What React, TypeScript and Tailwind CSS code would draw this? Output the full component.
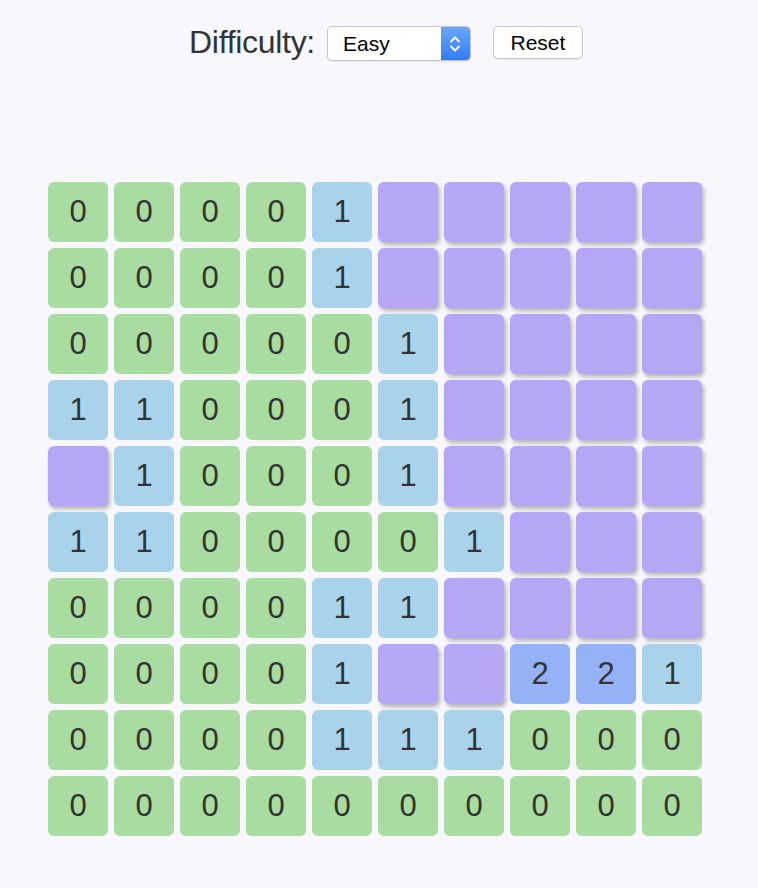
import React from 'react';

type Cell = number | 'P';

const board: Cell[][] = [
  [0, 0, 0, 0, 1, 'P', 'P', 'P', 'P', 'P'],
  [0, 0, 0, 0, 1, 'P', 'P', 'P', 'P', 'P'],
  [0, 0, 0, 0, 0, 1, 'P', 'P', 'P', 'P'],
  [1, 1, 0, 0, 0, 1, 'P', 'P', 'P', 'P'],
  ['P', 1, 0, 0, 0, 1, 'P', 'P', 'P', 'P'],
  [1, 1, 0, 0, 0, 0, 1, 'P', 'P', 'P'],
  [0, 0, 0, 0, 1, 1, 'P', 'P', 'P', 'P'],
  [0, 0, 0, 0, 1, 'P', 'P', 2, 2, 1],
  [0, 0, 0, 0, 1, 1, 1, 0, 0, 0],
  [0, 0, 0, 0, 0, 0, 0, 0, 0, 0],
];

const Tile = ({ value }: { value: Cell }) => {
  if (value === 'P') {
    return (
      <div className="w-[60px] h-[60px] rounded-[6px] bg-[#b5a7f6] shadow-[2px_3px_4px_rgba(0,0,0,0.28)]" />
    );
  }
  const color =
    value === 0 ? 'bg-[#a8dca0]' : value === 1 ? 'bg-[#a9d3eb]' : 'bg-[#95b2f7]';
  return (
    <div
      className={`w-[60px] h-[60px] rounded-[6px] ${color} flex items-center justify-center text-[31px] text-[#333333]`}
    >
      {value}
    </div>
  );
};

export default function App() {
  return (
    <div
      className="w-[758px] h-[888px] bg-[#f7f7fd] flex flex-col items-center"
      style={{ fontFamily: '"Liberation Sans", Arial, sans-serif' }}
    >
      <div className="flex items-center mt-[18px] ml-[14px]">
        <span className="text-[32px] text-[#333333] tracking-[-0.3px]">Difficulty:</span>
        <div className="ml-[12px] mt-[3px] flex h-[35px] w-[144px] rounded-[5px] border border-[#c6c6c6] bg-white shadow-[0_1px_1px_rgba(0,0,0,0.08)] overflow-hidden">
          <span className="flex-1 pl-[15px] flex items-center text-[21px] text-black">Easy</span>
          <div className="w-[29px] bg-gradient-to-b from-[#6aa6f8] to-[#2f7cf6] flex items-center justify-center">
            <svg width="12" height="20" viewBox="0 0 12 20" fill="none" stroke="white" strokeWidth="1.8" strokeLinecap="round" strokeLinejoin="round">
              <path d="M2 7.5 L6 3.5 L10 7.5" />
              <path d="M2 12.5 L6 16.5 L10 12.5" />
            </svg>
          </div>
        </div>
        <button className="ml-[22px] h-[33px] w-[90px] rounded-[5px] border border-[#c8c8c8] bg-white text-[21px] text-black shadow-[0_1px_1px_rgba(0,0,0,0.08)]">
          Reset
        </button>
      </div>

      <div className="mt-[116px] mr-[8px] grid grid-cols-10 gap-[6px]">
        {board.map((row, r) =>
          row.map((v, c) => <Tile key={`${r}-${c}`} value={v} />)
        )}
      </div>
    </div>
  );
}
